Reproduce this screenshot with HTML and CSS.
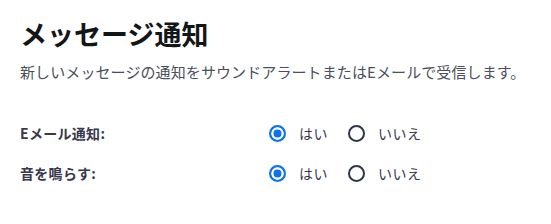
FILE: index.html
```html
<!DOCTYPE html>
<html lang="ja">
<head>
  <meta charset="UTF-8" />
  <title>メッセージ通知</title>
  <link rel="stylesheet" href="styles.css">
</head>
<body>
  <section class="panel">
    <h1>メッセージ通知</h1>
    <p class="desc">新しいメッセージの通知をサウンドアラートまたはEメールで受信します。</p>

    <div class="settings">
      <div class="row">
        <span class="label">Eメール通知:</span>
        <div class="choices">
          <label class="choice"><input type="radio" name="mail" checked> はい</label>
          <label class="choice"><input type="radio" name="mail"> いいえ</label>
        </div>
      </div>
      <div class="row">
        <span class="label">音を鳴らす:</span>
        <div class="choices">
          <label class="choice"><input type="radio" name="sound" checked> はい</label>
          <label class="choice"><input type="radio" name="sound"> いいえ</label>
        </div>
      </div>
    </div>
  </section>
</body>
</html>
```

FILE: styles.css
```css
body {
  margin: 0;
  background: #fff;
  font-family: "Noto Sans CJK JP", "Noto Sans", sans-serif;
  color: #232333;
}
.panel {
  padding: 16px 20px;
}
h1 {
  margin: 0;
  font-size: 27px;
  line-height: 36px;
  font-weight: 700;
  color: #131619;
}
.desc {
  margin: 10px 0 0;
  font-size: 15px;
  line-height: 20px;
  letter-spacing: 0.1px;
  white-space: nowrap;
  color: #4a4f5c;
}
.settings {
  margin-top: 31px;
}
.row {
  display: flex;
  align-items: center;
  height: 40px;
}
.label {
  width: 249px;
  font-size: 14px;
  font-weight: 700;
  letter-spacing: 0.3px;
  color: #39394d;
}
.choices {
  display: flex;
  align-items: center;
  gap: 20px;
}
.choice {
  display: flex;
  align-items: center;
  gap: 13px;
  font-size: 14px;
  letter-spacing: 0.5px;
  color: #39394d;
}
.choice input {
  appearance: none;
  box-sizing: border-box;
  margin: 0;
  width: 17px;
  height: 17px;
  border: 2px solid #2d3548;
  border-radius: 50%;
  background: #fff;
}
.choice input:checked {
  border-color: #0e72ed;
  background: #0e72ed;
  box-shadow: inset 0 0 0 2.5px #fff;
}
```
